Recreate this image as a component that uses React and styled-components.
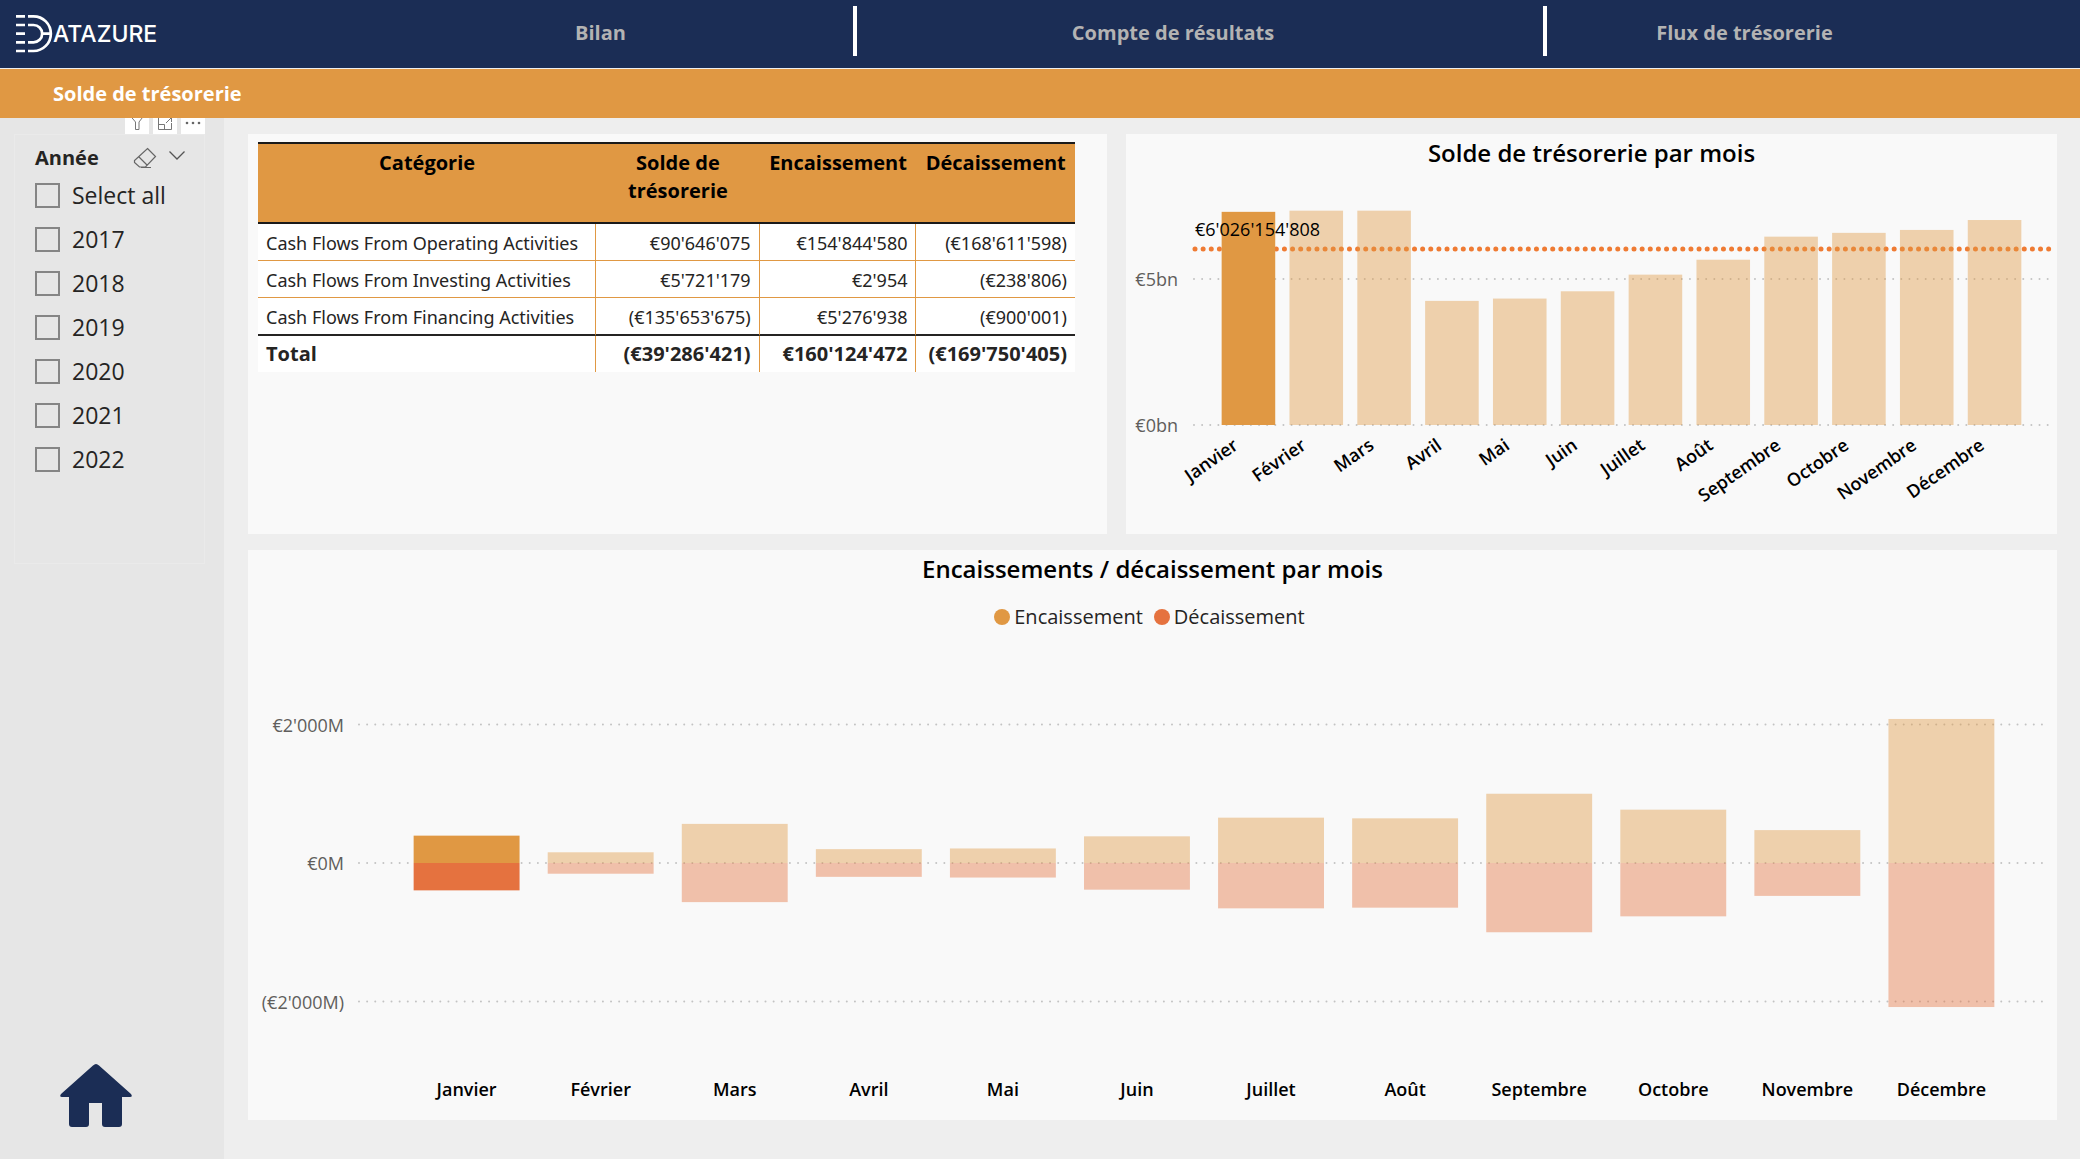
import React from "react";
import styled, { createGlobalStyle, css } from "styled-components";

const navy = "#1b2d55";
const amber = "#e09843";
const coral = "#e5723f";
const faded = 0.42;

const GlobalStyle = createGlobalStyle`
  * { box-sizing: border-box; }
  body {
    margin: 0;
    background: #eeeeee;
    color: #252423;
    font-family: "Open Sans", "Noto Sans", sans-serif;
  }
`;

const Page = styled.div`
  display: flex;
  flex-direction: column;
  min-height: 100vh;
`;

const Header = styled.header`
  display: grid;
  grid-template-columns: 348fr 509fr 690fr 533fr;
  align-items: center;
  height: 69px;
  padding-bottom: 1px;
  background: ${navy};
  border-bottom: 1px solid #eeeeee;
`;

const LogoLink = styled.a`
  display: flex;
  align-self: start;
  padding: 14px 0 0 16px;
`;

const NavCell = styled.div`
  display: flex;
  justify-content: center;
  align-items: center;
  height: 50px;
  margin-bottom: 6px;
  padding-right: ${(p) => p.$inset || 0}px;
  ${(p) => p.$divided && css`border-right: 4px solid #ffffff;`}
`;

const NavLink = styled.a`
  padding-top: 4px;
  color: #b3b3b3;
  font-size: 20px;
  font-weight: 700;
  line-height: 28px;
  text-decoration: none;
  white-space: nowrap;
`;

const TitleBar = styled.div`
  height: 49px;
  padding: 0 53px;
  background: ${amber};
`;

const PageTitle = styled.h1`
  margin: 0;
  color: #ffffff;
  font-size: 20px;
  font-weight: 700;
  line-height: 49px;
`;

const Body = styled.div`
  display: grid;
  grid-template-columns: 224px minmax(0, 1fr);
  flex: 1;
`;

const Sidebar = styled.aside`
  display: flex;
  flex-direction: column;
  justify-content: space-between;
  padding: 0 19px 30px 14px;
  background: #e6e6e6;
`;

const VisualActions = styled.div`
  display: flex;
  justify-content: flex-end;
  align-items: flex-end;
  gap: 4px;
  height: 16px;
  overflow: hidden;
`;

const IconButton = styled.button`
  display: flex;
  flex: none;
  justify-content: center;
  align-items: center;
  width: ${(p) => p.$size || 24}px;
  height: ${(p) => p.$size || 24}px;
  padding: 0;
  border: 0;
  background: ${(p) => (p.$plain ? "none" : "#ffffff")};
`;

const Slicer = styled.fieldset`
  min-width: 0;
  height: 430px;
  margin: 0;
  padding: 8px 11px 0 20px;
  border: 1px solid #eaeaea;
`;

const SlicerHeader = styled.div`
  display: flex;
  align-items: center;
  height: 30px;
`;

const SlicerTitle = styled.h2`
  flex: 1;
  margin: 0;
  font-size: 20px;
  font-weight: 700;
  line-height: 28px;
`;

const Option = styled.label`
  display: flex;
  align-items: center;
  gap: 12px;
  height: 44px;
  font-size: 23px;
  line-height: 32px;
`;

const Checkbox = styled.input`
  appearance: none;
  width: 25px;
  height: 25px;
  margin: 0;
  border: 2px solid #858585;
`;

const HomeLink = styled.a`
  display: flex;
  margin-left: 45px;
`;

const Content = styled.main`
  display: flex;
  flex-direction: column;
  gap: 16px;
  padding: 16px 23px 39px 24px;
`;

const TopRow = styled.div`
  display: grid;
  grid-template-columns: minmax(0, 859fr) minmax(0, 931fr);
  gap: 19px;
`;

const Panel = styled.section`
  padding: ${(p) => p.$padding || "0"};
  background: #f9f9f9;
`;

const Table = styled.table`
  width: 100%;
  table-layout: fixed;
  border-collapse: separate;
  border-spacing: 0;
  background: #ffffff;
`;

const HeadCell = styled.th`
  width: ${(p) => p.$width};
  height: 82px;
  padding: 5px 6px;
  border-top: 2px solid #1a1a1a;
  border-bottom: 2px solid #1a1a1a;
  background: ${amber};
  color: #000000;
  font-size: 20px;
  font-weight: 700;
  line-height: 28px;
  vertical-align: top;
`;

const Cell = styled.td`
  height: ${(p) => (p.$last ? 38 : 37)}px;
  padding: 2px 8px 0;
  border-right: 1px solid ${amber};
  border-bottom: ${(p) => (p.$last ? "2px solid #252423" : `1px solid ${amber}`)};
  font-family: "Noto Sans", "Open Sans", sans-serif;
  font-size: 18px;
  line-height: 28px;
  text-align: right;
  white-space: nowrap;
  &:first-child { text-align: left; }
  &:last-child { border-right: 0; }
  ${(p) => p.$total && css`
    height: 36px;
    padding-top: 0;
    border-bottom: 0;
    font-family: "Open Sans", "Noto Sans", sans-serif;
    font-size: 20px;
    font-weight: 700;
  `}
`;

const ChartTitle = styled.h2`
  margin: 0;
  color: #000000;
  font-size: 24px;
  font-weight: 600;
  line-height: 38px;
  text-align: center;
`;

const Legend = styled.ul`
  display: flex;
  justify-content: center;
  gap: 11px;
  margin: 0;
  padding: 13px 6px 0 0;
  list-style: none;
`;

const LegendItem = styled.li`
  display: flex;
  align-items: center;
  gap: 4px;
  color: #252423;
  font-size: 20px;
  line-height: 32px;
  &::before {
    content: "";
    width: 16px;
    height: 16px;
    border-radius: 50%;
    background: ${(p) => p.$color};
  }
`;

const ChartRow = styled.div`
  display: grid;
  grid-template-columns: ${(p) => p.$axis}px minmax(0, 1fr);
  padding-right: 8px;
`;

const Plot = styled.svg`
  display: block;
  grid-column: 2;
  width: 100%;
  height: ${(p) => p.$height}px;
  overflow: visible;
`;

const AxisText = styled.text`
  fill: #605e5c;
  font-size: 18px;
  text-anchor: end;
`;

const MonthText = styled.text`
  fill: #000000;
  font-size: 18px;
  font-weight: 600;
  text-anchor: ${(p) => p.$anchor};
`;

const ValueText = styled.text`
  fill: #000000;
  font-size: 18px;
`;

const months = [
  { name: "Janvier", balance: 7.3, flow: 395 },
  { name: "Février", balance: 7.34, flow: 155 },
  { name: "Mars", balance: 7.34, flow: 565 },
  { name: "Avril", balance: 4.25, flow: 200 },
  { name: "Mai", balance: 4.33, flow: 210 },
  { name: "Juin", balance: 4.58, flow: 385 },
  { name: "Juillet", balance: 5.15, flow: 655 },
  { name: "Août", balance: 5.66, flow: 645 },
  { name: "Septembre", balance: 6.45, flow: 1000 },
  { name: "Octobre", balance: 6.58, flow: 770 },
  { name: "Novembre", balance: 6.68, flow: 475 },
  { name: "Décembre", balance: 7.02, flow: 2080 },
];

const rows = [
  ["Cash Flows From Operating Activities", "€90'646'075", "€154'844'580", "(€168'611'598)"],
  ["Cash Flows From Investing Activities", "€5'721'179", "€2'954", "(€238'806)"],
  ["Cash Flows From Financing Activities", "(€135'653'675)", "€5'276'938", "(€900'001)"],
];
const total = ["Total", "(€39'286'421)", "€160'124'472", "(€169'750'405)"];

const years = ["Select all", "2017", "2018", "2019", "2020", "2021", "2022"];

/* Horizontal band of one month, in percent of the plot width */
const band = (index, margin) => {
  const step = (100 - 2 * margin) / 12;
  const width = step * 0.79;
  return { center: margin + step * (index + 0.5), width, x: margin + step * (index + 0.5) - width / 2 };
};

function GridLine({ y }) {
  return (
    <line x1="0" x2="100%" y1={y} y2={y} stroke="#c3c3c3" strokeWidth="2" strokeLinecap="round" strokeDasharray="0 8.13" />
  );
}

function BalanceChart() {
  const zero = 253;
  const scale = 29.2;
  return (
    <ChartRow $axis={68}>
      <Plot $height={362} role="img" aria-label="Solde de trésorerie par mois">
        <GridLine y={zero - 5 * scale} />
        <GridLine y={zero} />
        <AxisText x="-16" y={zero - 5 * scale + 7}>€5bn</AxisText>
        <AxisText x="-16" y={zero + 7}>€0bn</AxisText>
        <line x1="1" x2="100%" y1="77" y2="77" stroke="#ef7b33" strokeWidth="5" strokeLinecap="round" strokeDasharray="0 8.13" />
        {months.map((m, i) => {
          const b = band(i, 2.4);
          return (
            <React.Fragment key={m.name}>
              <rect
                x={`${b.x}%`}
                y={zero - m.balance * scale}
                width={`${b.width}%`}
                height={m.balance * scale}
                fill={amber}
                fillOpacity={i === 0 ? 1 : faded}
              />
              <svg x={`${b.center}%`} y={zero + 18} overflow="visible">
                <MonthText $anchor="end" transform="translate(-9 5) rotate(-35)">{m.name}</MonthText>
              </svg>
            </React.Fragment>
          );
        })}
        <ValueText x="1" y="64">€6'026'154'808</ValueText>
      </Plot>
    </ChartRow>
  );
}

function FlowChart() {
  const zero = 230;
  const scale = 138.5 / 2000;
  return (
    <ChartRow $axis={111}>
      <Plot $height={487} role="img" aria-label="Encaissements et décaissements par mois">
        {[2000, 0, -2000].map((v) => <GridLine key={v} y={zero - v * scale} />)}
        <AxisText x="-15" y={zero - 2000 * scale + 7}>€2'000M</AxisText>
        <AxisText x="-15" y={zero + 7}>€0M</AxisText>
        <AxisText x="-15" y={zero + 2000 * scale + 7}>(€2'000M)</AxisText>
        {months.map((m, i) => {
          const b = band(i, 2.4);
          const opacity = i === 0 ? 1 : faded;
          return (
            <React.Fragment key={m.name}>
              <rect x={`${b.x}%`} y={zero - m.flow * scale} width={`${b.width}%`} height={m.flow * scale} fill={amber} fillOpacity={opacity} />
              <rect x={`${b.x}%`} y={zero} width={`${b.width}%`} height={m.flow * scale} fill={coral} fillOpacity={opacity} />
              <MonthText $anchor="middle" x={`${b.center}%`} y={zero + 233}>{m.name}</MonthText>
            </React.Fragment>
          );
        })}
      </Plot>
    </ChartRow>
  );
}

function Logo() {
  return (
    <svg width="150" height="40" viewBox="0 0 150 40" role="img" aria-label="Datazure">
      <g fill="none" stroke="#ffffff" strokeWidth="2.7">
        <path d="M0 2.3h9M0 11h9M0 19.7h9M0 28.3h9M0 37h9" />
        <path d="M12 2.3h5.5a17.35 17.35 0 0 1 0 34.7H12" />
        <path d="M12 11h5.5a8.65 8.65 0 0 1 0 17.3H12M26 19.7h9" />
      </g>
      <text x="37" y="28" fill="#ffffff" fontFamily="Inter, sans-serif" fontSize="23" fontWeight="500">ATAZURE</text>
    </svg>
  );
}

export default function App() {
  return (
    <>
      <GlobalStyle />
      <Page>
        <Header>
          <LogoLink href="#accueil"><Logo /></LogoLink>
          <NavCell $divided><NavLink href="#bilan">Bilan</NavLink></NavCell>
          <NavCell $divided $inset={54}><NavLink href="#resultats">Compte de résultats</NavLink></NavCell>
          <NavCell $inset={138}><NavLink href="#flux">Flux de trésorerie</NavLink></NavCell>
        </Header>
        <TitleBar><PageTitle>Solde de trésorerie</PageTitle></TitleBar>
        <Body>
          <Sidebar>
            <div>
              <VisualActions>
                <IconButton aria-label="Filtres">
                  <svg width="16" height="16" viewBox="0 0 16 16" fill="none" stroke="#777777">
                    <path d="M1 1.5h14L10 8v7.5H6.5V8z" />
                  </svg>
                </IconButton>
                <IconButton aria-label="Mode focus">
                  <svg width="16" height="16" viewBox="0 0 16 16" fill="none" stroke="#777777">
                    <path d="M6 3.5H1.5v12h13V9M1.5 10.5h6v5M9 9l5-5M9.5 3.5h5V8" />
                  </svg>
                </IconButton>
                <IconButton aria-label="Plus d'options">
                  <svg width="16" height="16" viewBox="0 0 16 16" fill="#666666">
                    <circle cx="2" cy="9" r="1.3" /><circle cx="8" cy="9" r="1.3" /><circle cx="14" cy="9" r="1.3" />
                  </svg>
                </IconButton>
              </VisualActions>
              <Slicer aria-label="Année">
                <SlicerHeader>
                  <SlicerTitle>Année</SlicerTitle>
                  <IconButton $plain $size={32} aria-label="Effacer les sélections">
                    <svg width="24" height="22" viewBox="0 0 24 22" fill="none" stroke="#666666" strokeWidth="1.2">
                      <path d="M14.5 1.5l8 8L12.5 20H6.5L1.5 15.500v-2zM6 10l8.500 8.500M8 20.500h10" />
                    </svg>
                  </IconButton>
                  <IconButton $plain $size={32} aria-label="Réduire">
                    <svg width="16" height="16" viewBox="0 0 16 16" fill="none" stroke="#555555" strokeWidth="1.3">
                      <path d="M0.5 1.5L8 9l7.5-7.5" />
                    </svg>
                  </IconButton>
                </SlicerHeader>
                {years.map((y) => (
                  <Option key={y}><Checkbox type="checkbox" />{y}</Option>
                ))}
              </Slicer>
            </div>
            <HomeLink href="#accueil" aria-label="Accueil">
              <svg width="74" height="67" viewBox="0 0 74 67" fill={navy}>
                <path d="M37 2q1.5 0 3 1.5L72 32q2 3-1 3H63v27q0 3-3 3H46q-3 0-3-3V41H30v21q0 3-3 3H13q-3 0-3-3V35H3q-3 0-1-3L34 3.5Q35.5 2 37 2z" />
              </svg>
            </HomeLink>
          </Sidebar>
          <Content>
            <TopRow>
              <Panel $padding="8px 32px 0 10px">
                <Table>
                  <thead>
                    <tr>
                      <HeadCell $width="41.4%">Catégorie</HeadCell>
                      <HeadCell $width="20%">Solde de trésorerie</HeadCell>
                      <HeadCell $width="19.2%">Encaissement</HeadCell>
                      <HeadCell $width="19.4%">Décaissement</HeadCell>
                    </tr>
                  </thead>
                  <tbody>
                    {rows.map((r, i) => (
                      <tr key={r[0]}>
                        {r.map((c) => <Cell key={c} $last={i === rows.length - 1}>{c}</Cell>)}
                      </tr>
                    ))}
                    <tr>{total.map((c) => <Cell key={c} $total>{c}</Cell>)}</tr>
                  </tbody>
                </Table>
              </Panel>
              <Panel>
                <ChartTitle>Solde de trésorerie par mois</ChartTitle>
                <BalanceChart />
              </Panel>
            </TopRow>
            <Panel>
              <ChartTitle>Encaissements / décaissement par mois</ChartTitle>
              <Legend>
                <LegendItem $color={amber}>Encaissement</LegendItem>
                <LegendItem $color={coral}>Décaissement</LegendItem>
              </Legend>
              <FlowChart />
            </Panel>
          </Content>
        </Body>
      </Page>
    </>
  );
}
